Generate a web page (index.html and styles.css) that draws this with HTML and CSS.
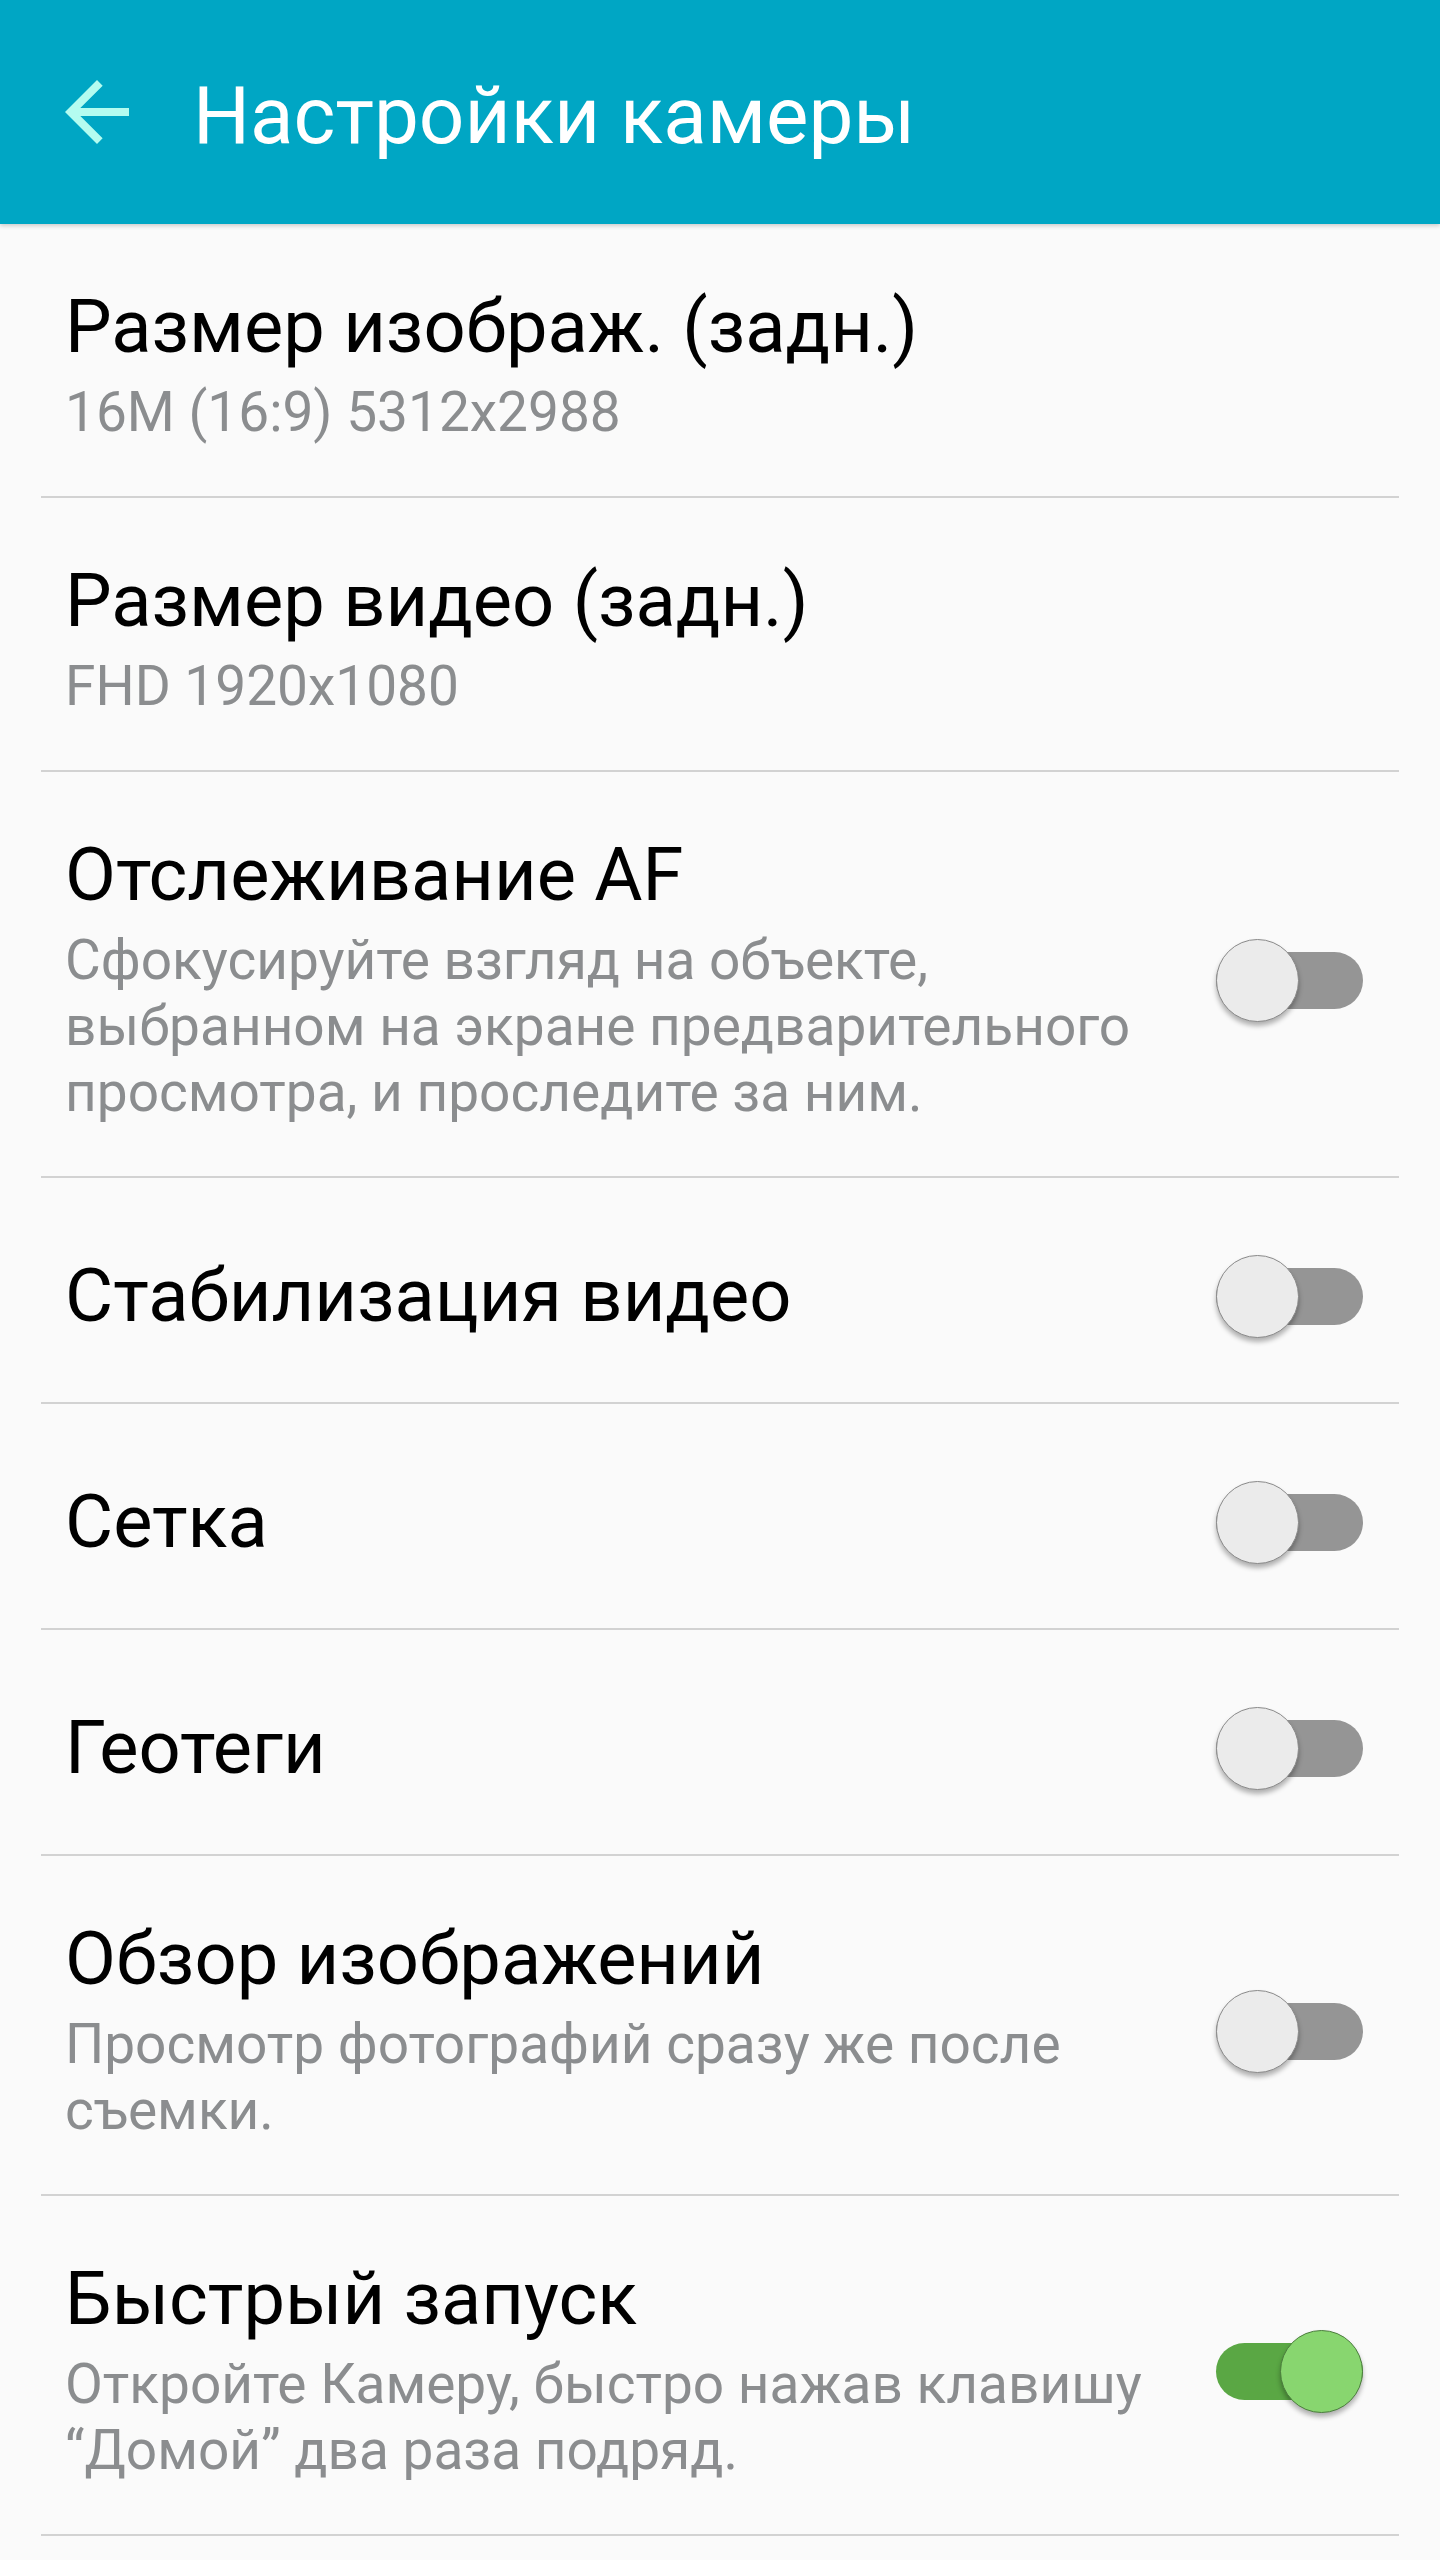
FILE: index.html
```html
<html>
<head>
<title>Настройки камеры</title>
<meta charset="utf-8">
<link rel="stylesheet" href="styles.css">
</head>
<body>

<header class="toolbar">
  <svg class="back" viewBox="0 0 24 24"><path d="M20 11H7.83l5.59-5.59L12 4l-8 8 8 8 1.41-1.41L7.83 13H20v-2z"/></svg>
  <h1>Настройки камеры</h1>
</header>

<ul class="settings">
  <li class="item">
    <div class="text">
      <div class="title">Размер изображ. (задн.)</div>
      <div class="summary">16M (16:9) 5312x2988</div>
    </div>
  </li>
  <li class="item">
    <div class="text">
      <div class="title">Размер видео (задн.)</div>
      <div class="summary">FHD 1920x1080</div>
    </div>
  </li>
  <li class="item">
    <div class="text">
      <div class="title">Отслеживание AF</div>
      <div class="summary">Сфокусируйте взгляд на объекте, выбранном на экране предварительного просмотра, и проследите за ним.</div>
    </div>
    <span class="switch"><span class="knob"></span></span>
  </li>
  <li class="item single">
    <div class="text">
      <div class="title">Стабилизация видео</div>
    </div>
    <span class="switch"><span class="knob"></span></span>
  </li>
  <li class="item single">
    <div class="text">
      <div class="title">Сетка</div>
    </div>
    <span class="switch"><span class="knob"></span></span>
  </li>
  <li class="item single">
    <div class="text">
      <div class="title">Геотеги</div>
    </div>
    <span class="switch"><span class="knob"></span></span>
  </li>
  <li class="item">
    <div class="text">
      <div class="title">Обзор изображений</div>
      <div class="summary">Просмотр фотографий сразу же после съемки.</div>
    </div>
    <span class="switch"><span class="knob"></span></span>
  </li>
  <li class="item">
    <div class="text">
      <div class="title">Быстрый запуск</div>
      <div class="summary">Откройте Камеру, быстро нажав клавишу “Домой” два раза подряд.</div>
    </div>
    <span class="switch on"><span class="knob"></span></span>
  </li>
</ul>

</body>
</html>
```

FILE: styles.css
```css
body {
  margin: 0;
  background: #fafafa;
  font-family: Roboto, "Noto Sans", sans-serif;
}

/* Toolbar */

.toolbar {
  position: relative;
  display: flex;
  align-items: center;
  height: 224px;
  padding-left: 49px;
  background: #00a6c4;
  box-shadow: 0 2px 4px rgba(0, 0, 0, 0.18);
}

.back {
  width: 96px;
  height: 96px;
  fill: #b4fcf0;
}

.toolbar h1 {
  margin: 0 0 0 48px;
  padding-top: 8px;
  font-size: 80px;
  font-weight: 400;
  line-height: 96px;
  color: #fff;
}

/* List */

.settings {
  list-style: none;
  margin: 0;
  padding: 0 41px;
}

.item {
  display: flex;
  align-items: center;
  padding: 63px 36px 51px 24px;
  border-bottom: 2px solid #d2d2d2;
}

.item.single {
  padding-top: 78px;
  padding-bottom: 66px;
}

.text {
  flex: 1;
}

.title {
  font-size: 74px;
  line-height: 80px;
  color: #000;
}

.summary {
  margin-top: 12px;
  font-size: 55px;
  line-height: 66px;
  color: #8b8d8f;
}

/* Switch */

.switch {
  position: relative;
  flex: none;
  width: 147px;
  height: 57px;
  margin-left: 24px;
  border-radius: 29px;
  background: #959595;
}

.knob {
  position: absolute;
  top: -13px;
  left: 0;
  width: 81px;
  height: 81px;
  border-radius: 50%;
  border: 1px solid #8a8a8a;
  background: #ebebeb;
  box-shadow: 0 4px 5px rgba(0, 0, 0, 0.3);
}

.switch.on {
  background: #5aa744;
}

.switch.on .knob {
  left: auto;
  right: 0;
  border-color: #4b7d3d;
  background: #88d66f;
}
```
